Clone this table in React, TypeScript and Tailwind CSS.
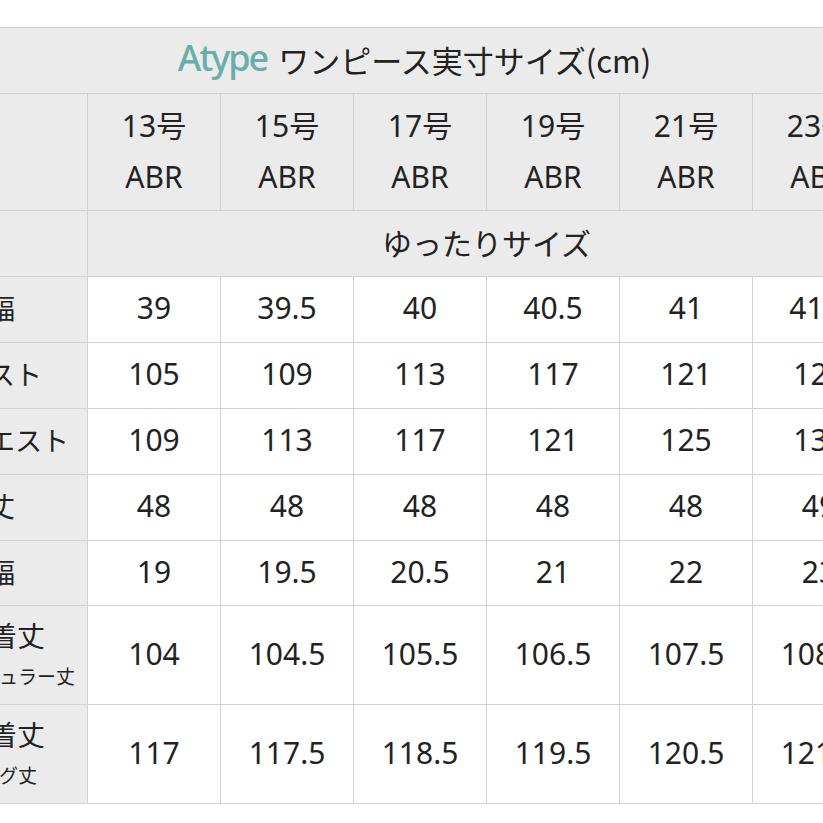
import React from "react";

const sizes = ["13号", "15号", "17号", "19号", "21号", "23号"];

type Row = { label: string; sub?: string; values: string[]; h: string };

const rows: Row[] = [
  { label: "肩幅", values: ["39", "39.5", "40", "40.5", "41", "41.5"], h: "h-[66px]" },
  { label: "バスト", values: ["105", "109", "113", "117", "121", "125"], h: "h-[66px]" },
  { label: "ウエスト", values: ["109", "113", "117", "121", "125", "130"], h: "h-[66px]" },
  { label: "袖丈", values: ["48", "48", "48", "48", "48", "49"], h: "h-[66px]" },
  { label: "袖幅", values: ["19", "19.5", "20.5", "21", "22", "23"], h: "h-[65px]" },
  { label: "総着丈", sub: "レギュラー丈", values: ["104", "104.5", "105.5", "106.5", "107.5", "108.5"], h: "h-[99px]" },
  { label: "総着丈", sub: "ロング丈", values: ["117", "117.5", "118.5", "119.5", "120.5", "121.5"], h: "h-[99px]" },
];

export default function App() {
  return (
    <div className="w-[823px] h-[823px] overflow-hidden bg-white font-['Noto_Sans','Noto_Sans_CJK_JP',sans-serif] text-[#222]">
      <div className="pt-[27px] ml-[-51px]">
        <table className="table-fixed border-collapse w-[936px]">
          <colgroup>
            <col className="w-[138px]" />
            {sizes.map((s) => (
              <col key={s} className="w-[133px]" />
            ))}
          </colgroup>
          <tbody>
            <tr className="h-[66px] bg-[#ebebeb]">
              <td colSpan={7} className="border border-[#d2d2d2] text-center align-middle">
                <div className="flex items-center justify-center gap-[11px] pr-[6px] pb-[2px]">
                  <span className="text-[36px] font-medium text-[#69aea8] tracking-[-2px] leading-none pb-[4px]">
                    Atype
                  </span>
                  <span className="text-[31px] leading-none font-['Noto_Sans_CJK_JP',sans-serif] text-[#222]">
                    ワンピース実寸サイズ(cm)
                  </span>
                </div>
              </td>
            </tr>
            <tr className="h-[117px] bg-[#ebebeb]">
              <td className="border border-[#d2d2d2]" />
              {sizes.map((s) => (
                <td key={s} className="border border-[#d2d2d2] text-center align-middle">
                  <div className="text-[30px] leading-[51px] pb-[2px]">
                    <div>{s}</div>
                    <div>ABR</div>
                  </div>
                </td>
              ))}
            </tr>
            <tr className="h-[66px] bg-[#ebebeb]">
              <td className="border border-[#d2d2d2]" />
              <td colSpan={6} className="border border-[#d2d2d2] text-center align-middle pb-[2px]">
                <span className="text-[30px] font-['Noto_Sans_CJK_JP',sans-serif]">ゆったりサイズ</span>
              </td>
            </tr>
            {rows.map((r, i) => (
              <tr key={i} className={r.h}>
                <td className="border border-[#d2d2d2] bg-[#ebebeb] align-middle pl-[11px] pb-[2px]">
                  {r.sub ? (
                    <div className="flex flex-col font-['Noto_Sans_CJK_JP',sans-serif]">
                      <span className="text-[28px] leading-[34px]">{r.label}</span>
                      <span className="text-[19px] leading-[30px] pt-[9px]">{r.sub}</span>
                    </div>
                  ) : (
                    <span className="text-[27px] font-['Noto_Sans_CJK_JP',sans-serif]">{r.label}</span>
                  )}
                </td>
                {r.values.map((v, j) => (
                  <td key={j} className="border border-[#d2d2d2] bg-white text-center align-middle pb-[4px]">
                    <span className="text-[30px]">{v}</span>
                  </td>
                ))}
              </tr>
            ))}
          </tbody>
        </table>
      </div>
    </div>
  );
}
